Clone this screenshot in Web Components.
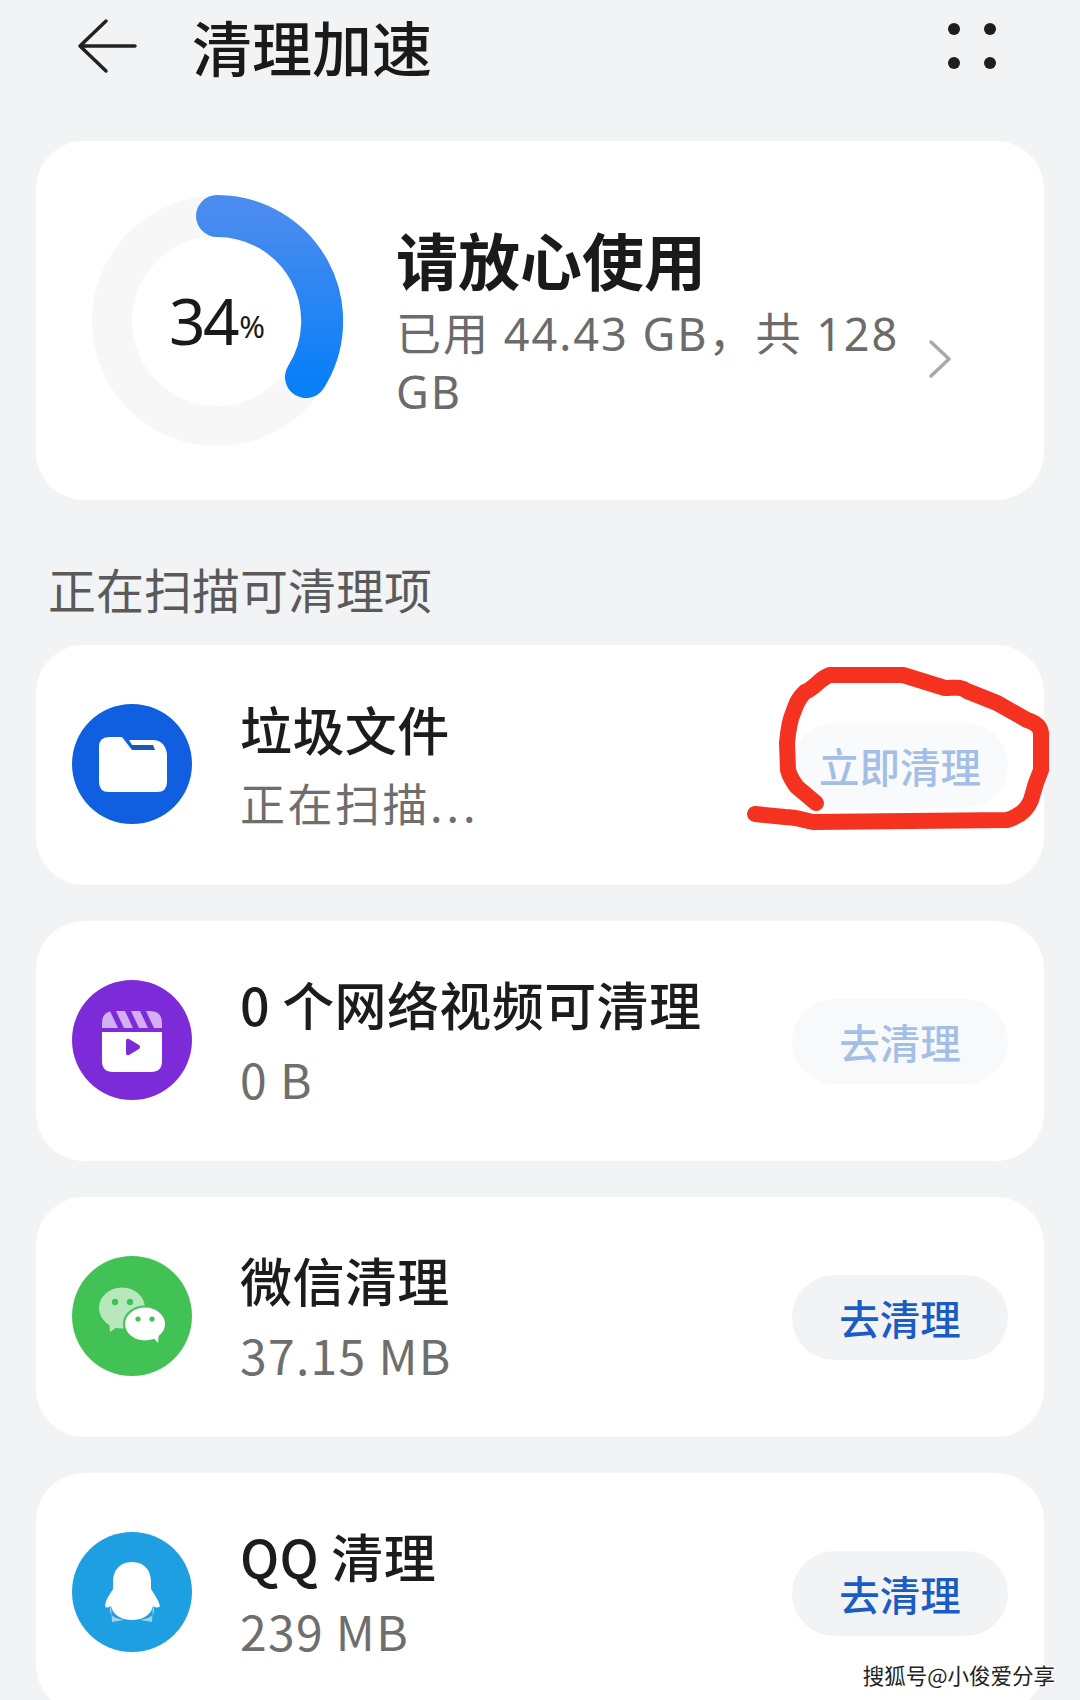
<!DOCTYPE html>
<html lang="zh">
<head>
<meta charset="utf-8">
<title>清理加速</title>
<style>
    html, body {
        margin: 0;
        height: 1700px;
        overflow: hidden;
        background: #f1f3f5;
        font-family: "Noto Sans CJK SC", "Noto Sans", sans-serif;
    }
    clean-item svg { display: block; width: 120px; height: 120px; }
    .num { font-size: 48px; letter-spacing: 1.3px; }
    .dots { letter-spacing: 4px; }
</style>
</head>
<body>
<clean-page>
    <clean-header title="清理加速"></clean-header>
    <storage-card percent="34" heading="请放心使用" detail="已用 44.43 GB，共 128 GB"></storage-card>
    <section-label>正在扫描可清理项</section-label>

    <clean-item action="立即清理" muted>
        <svg slot="icon" viewBox="0 0 120 120">
            <circle cx="60" cy="60" r="60" fill="#0f5fe0"/>
            <path d="M57 36H82Q93 37 95 50V60H62V44Z" fill="#fff"/>
            <path d="M58 41H81L83 46H62Z" fill="#1b56b0"/>
            <path d="M37 33H50L60 46H84Q95 46 95 57V78Q95 88 85 88H37Q27 88 27 78V43Q27 33 37 33Z" fill="#fff"/>
        </svg>
        <span slot="title">垃圾文件</span>
        <span slot="sub">正在扫描<span class="dots">...</span></span>
    </clean-item>

    <clean-item action="去清理" muted faint>
        <svg slot="icon" viewBox="0 0 120 120">
            <circle cx="60" cy="60" r="60" fill="#7d2bd9"/>
            <path d="M30 48V43Q30 31 42 31H78Q90 31 90 43V48Z" fill="#d3aef5"/>
            <path d="M38 31H44L52 48H46ZM53 31H59L67 48H61ZM68 31H74L82 48H76Z" fill="#7d2bd9"/>
            <path d="M30 52H90V81Q90 92 79 92H41Q30 92 30 81Z" fill="#fff"/>
            <path d="M54 61Q54 58 57 59L67 65Q69 67 67 69L57 75Q54 76 54 73Z" fill="#7d2bd9"/>
        </svg>
        <span slot="title">0 个网络视频可清理</span>
        <span slot="sub" class="num">0 B</span>
    </clean-item>

    <clean-item action="去清理">
        <svg slot="icon" viewBox="0 0 120 120">
            <circle cx="60" cy="60" r="60" fill="#42c255"/>
            <ellipse cx="50" cy="52" rx="23" ry="20.5" fill="#b7e8bd"/>
            <path d="M37 65L38 76L48 69Z" fill="#b7e8bd"/>
            <circle cx="43" cy="46" r="3.2" fill="#42c255"/>
            <circle cx="58" cy="46" r="3.2" fill="#42c255"/>
            <ellipse cx="73" cy="68" rx="21" ry="17.5" fill="#fff" stroke="#42c255" stroke-width="2"/>
            <path d="M80 80L86 87L87 76Z" fill="#fff"/>
            <circle cx="66" cy="63" r="2.6" fill="#42c255"/>
            <circle cx="80" cy="63" r="2.6" fill="#42c255"/>
        </svg>
        <span slot="title">微信清理</span>
        <span slot="sub" class="num">37.15 MB</span>
    </clean-item>

    <clean-item action="去清理">
        <svg slot="icon" viewBox="0 0 120 120">
            <circle cx="60" cy="60" r="60" fill="#1d9fe2"/>
            <path d="M39 73Q35 82 44 86L52 88L40 90Z" fill="#a6cfe8"/>
            <path d="M81 73Q85 82 76 86L68 88L80 90Z" fill="#a6cfe8"/>
            <path d="M60 30C47 30 41 39 41 50V57C38 62 34 67 33 74Q34 77 39 74C41 82 46 85 52 87Q60 89 68 87C74 85 79 82 81 74Q86 77 88 74C86 67 82 62 79 57V50C79 39 73 30 60 30Z" fill="#fff"/>
        </svg>
        <span slot="title">QQ 清理</span>
        <span slot="sub" class="num">239 MB</span>
    </clean-item>

    <scribble-mark></scribble-mark>
    <water-mark>搜狐号@小俊爱分享</water-mark>
</clean-page>

<script>
class CleanPage extends HTMLElement {
    constructor() {
        super();
        this.attachShadow({ mode: 'open' });
        this.shadowRoot.innerHTML = `
            <style>
                :host {
                    display: flex;
                    flex-direction: column;
                    position: relative;
                    height: 1700px;
                    overflow: hidden;
                    box-sizing: border-box;
                    padding: 0 36px;
                    color: #1a1a1a;
                }
            </style>
            <slot></slot>
        `;
    }
}

class CleanHeader extends HTMLElement {
    constructor() {
        super();
        this.attachShadow({ mode: 'open' });
    }

    connectedCallback() {
        this.shadowRoot.innerHTML = `
            <style>
                :host {
                    display: flex;
                    flex: none;
                    align-items: center;
                    height: 92px;
                    margin-bottom: 49px;
                    padding-left: 41px;
                }
                h1 {
                    margin: 0 0 0 55px;
                    font-size: 60px;
                    line-height: 92px;
                    font-weight: 500;
                    flex: 1;
                }
                svg { display: block; }
                .dots { margin-right: 48px; }
            </style>
            <svg width="60" height="56" viewBox="0 0 60 56" fill="none" stroke="#222" stroke-width="3.5" stroke-linecap="round" stroke-linejoin="round">
                <path d="M29 3L3 28L29 53M3 28H58"/>
            </svg>
            <h1>${this.getAttribute('title')}</h1>
            <svg class="dots" width="48" height="48" viewBox="0 0 48 48" fill="#1e1e1e">
                <circle cx="6" cy="7" r="6"/><circle cx="42" cy="7" r="6"/>
                <circle cx="6" cy="41" r="6"/><circle cx="42" cy="41" r="6"/>
            </svg>
        `;
    }
}

class StorageCard extends HTMLElement {
    constructor() {
        super();
        this.attachShadow({ mode: 'open' });
    }

    connectedCallback() {
        this.shadowRoot.innerHTML = `
            <style>
                :host {
                    display: flex;
                    flex: none;
                    align-items: center;
                    height: 359px;
                    box-sizing: border-box;
                    padding-left: 55px;
                    background: #fff;
                    border-radius: 48px;
                }
                .ring { position: relative; width: 252px; height: 252px; flex: none; }
                .ring svg { display: block; }
                .pct {
                    position: absolute;
                    inset: 0;
                    display: flex;
                    align-items: center;
                    justify-content: center;
                    font-size: 64px;
                    letter-spacing: -2.5px;
                    line-height: 1;
                    font-family: "Noto Sans", sans-serif;
                    box-sizing: border-box;
                }
                .pct small { font-size: 31px; letter-spacing: 0; margin: 12px 0 0 2px; }
                .text { width: 512px; margin-left: 53px; margin-top: -3px; }
                h2 {
                    margin: 0;
                    font-size: 62px;
                    line-height: 84px;
                    font-weight: 700;
                }
                p {
                    margin: 4px 0 0;
                    font-size: 45px;
                    line-height: 58px;
                    letter-spacing: 2px;
                    color: #6b6b6b;
                    font-family: "Noto Sans", "Noto Sans CJK SC", sans-serif;
                }
                .chev { margin-left: 20px; margin-top: 76px; display: block; }
            </style>
            <div class="ring">
                <svg width="252" height="252" viewBox="0 0 252 252" fill="none">
                    <defs>
                        <linearGradient id="arc" x1="0" y1="0" x2="0" y2="1">
                            <stop offset="0" stop-color="#4a8bef"/>
                            <stop offset="1" stop-color="#0a80f8"/>
                        </linearGradient>
                    </defs>
                    <circle cx="126" cy="126" r="105" stroke="#f7f7f7" stroke-width="40"/>
                    <path d="M126 21A105 105 0 0 1 215 182" stroke="url(#arc)" stroke-width="42" stroke-linecap="round"/>
                </svg>
                <div class="pct">${this.getAttribute('percent')}<small>%</small></div>
            </div>
            <div class="text">
                <h2>${this.getAttribute('heading')}</h2>
                <p>${this.getAttribute('detail')}</p>
            </div>
            <svg class="chev" width="24" height="40" viewBox="0 0 24 40" fill="none" stroke="#a8a8a8" stroke-width="3.5" stroke-linecap="round" stroke-linejoin="round">
                <path d="M3 3L21 20L3 37"/>
            </svg>
        `;
    }
}

class SectionLabel extends HTMLElement {
    constructor() {
        super();
        this.attachShadow({ mode: 'open' });
        this.shadowRoot.innerHTML = `
            <style>
                :host {
                    display: block;
                    flex: none;
                    height: 145px;
                    box-sizing: border-box;
                    padding: 55px 0 0 12px;
                    font-size: 48px;
                    line-height: 66px;
                    color: #5a5a5a;
                }
            </style>
            <slot></slot>
        `;
    }
}

class CleanItem extends HTMLElement {
    constructor() {
        super();
        this.attachShadow({ mode: 'open' });
    }

    connectedCallback() {
        const muted = this.hasAttribute('muted');
        const faint = this.hasAttribute('faint');
        this.shadowRoot.innerHTML = `
            <style>
                :host {
                    display: flex;
                    align-items: center;
                    flex: none;
                    height: 240px;
                    margin-bottom: 36px;
                    box-sizing: border-box;
                    padding: 0 36px;
                    background: #fff;
                    border-radius: 48px;
                }
                .icon { flex: none; width: 120px; height: 120px; margin-top: -2px; }
                .text { flex: 1; margin-left: 48px; margin-top: -2px; min-width: 0; }
                .title {
                    font-size: 52px;
                    line-height: 68px;
                    letter-spacing: 0.4px;
                    font-weight: 500;
                    color: #1c1c1c;
                }
                .sub {
                    font-size: 45px;
                    line-height: 60px;
                    letter-spacing: 2.5px;
                    margin-top: 10px;
                    color: #6e6e6e;
                }
                .btn {
                    flex: none;
                    width: 216px;
                    height: 85px;
                    display: flex;
                    align-items: center;
                    justify-content: center;
                    border-radius: 43px;
                    font-size: 40.5px;
                    font-weight: 500;
                    color: ${muted ? '#a3bfe6' : '#1a5cc4'};
                    background: ${muted ? (faint ? '#f8f9fa' : '#f9fafb') : '#f1f3f5'};
                }
            </style>
            <div class="icon"><slot name="icon"></slot></div>
            <div class="text">
                <div class="title"><slot name="title"></slot></div>
                <div class="sub"><slot name="sub"></slot></div>
            </div>
            <div class="btn">${this.getAttribute('action')}</div>
        `;
    }
}

// the red hand drawn circle lies over the first row
class ScribbleMark extends HTMLElement {
    constructor() {
        super();
        this.attachShadow({ mode: 'open' });
        this.shadowRoot.innerHTML = `
            <style>
                :host { position: absolute; left: 0; top: 0; pointer-events: none; }
                svg { display: block; }
            </style>
            <svg width="1080" height="900" viewBox="0 0 1080 900" fill="none" stroke="#f5311f" stroke-width="16" stroke-linecap="round" stroke-linejoin="round">
                <path d="M755 814L785 817C795 817 803 820 813 822L1007 820C1018 817 1027 810 1031 800L1036 783L1041 770V733C1040 725 1034 722 1027 720L997 703L967 691C960 686 955 688 945 688L903 675H830C820 678 815 688 805 692C798 698 796 705 793 713C789 722 788 732 787 743L788 770C790 778 794 783 797 787L816 803"/>
            </svg>
        `;
    }
}

class WaterMark extends HTMLElement {
    constructor() {
        super();
        this.attachShadow({ mode: 'open' });
        this.shadowRoot.innerHTML = `
            <style>
                :host {
                    position: absolute;
                    right: 25px;
                    bottom: 12px;
                    font-size: 21.5px;
                    line-height: 26px;
                    color: #222;
                    text-shadow: 1px 0 0 #fff, -1px 0 0 #fff, 0 1px 0 #fff, 0 -1px 0 #fff;
                }
            </style>
            <slot></slot>
        `;
    }
}

customElements.define('clean-page', CleanPage);
customElements.define('clean-header', CleanHeader);
customElements.define('storage-card', StorageCard);
customElements.define('section-label', SectionLabel);
customElements.define('clean-item', CleanItem);
customElements.define('scribble-mark', ScribbleMark);
customElements.define('water-mark', WaterMark);
</script>
</body>
</html>
